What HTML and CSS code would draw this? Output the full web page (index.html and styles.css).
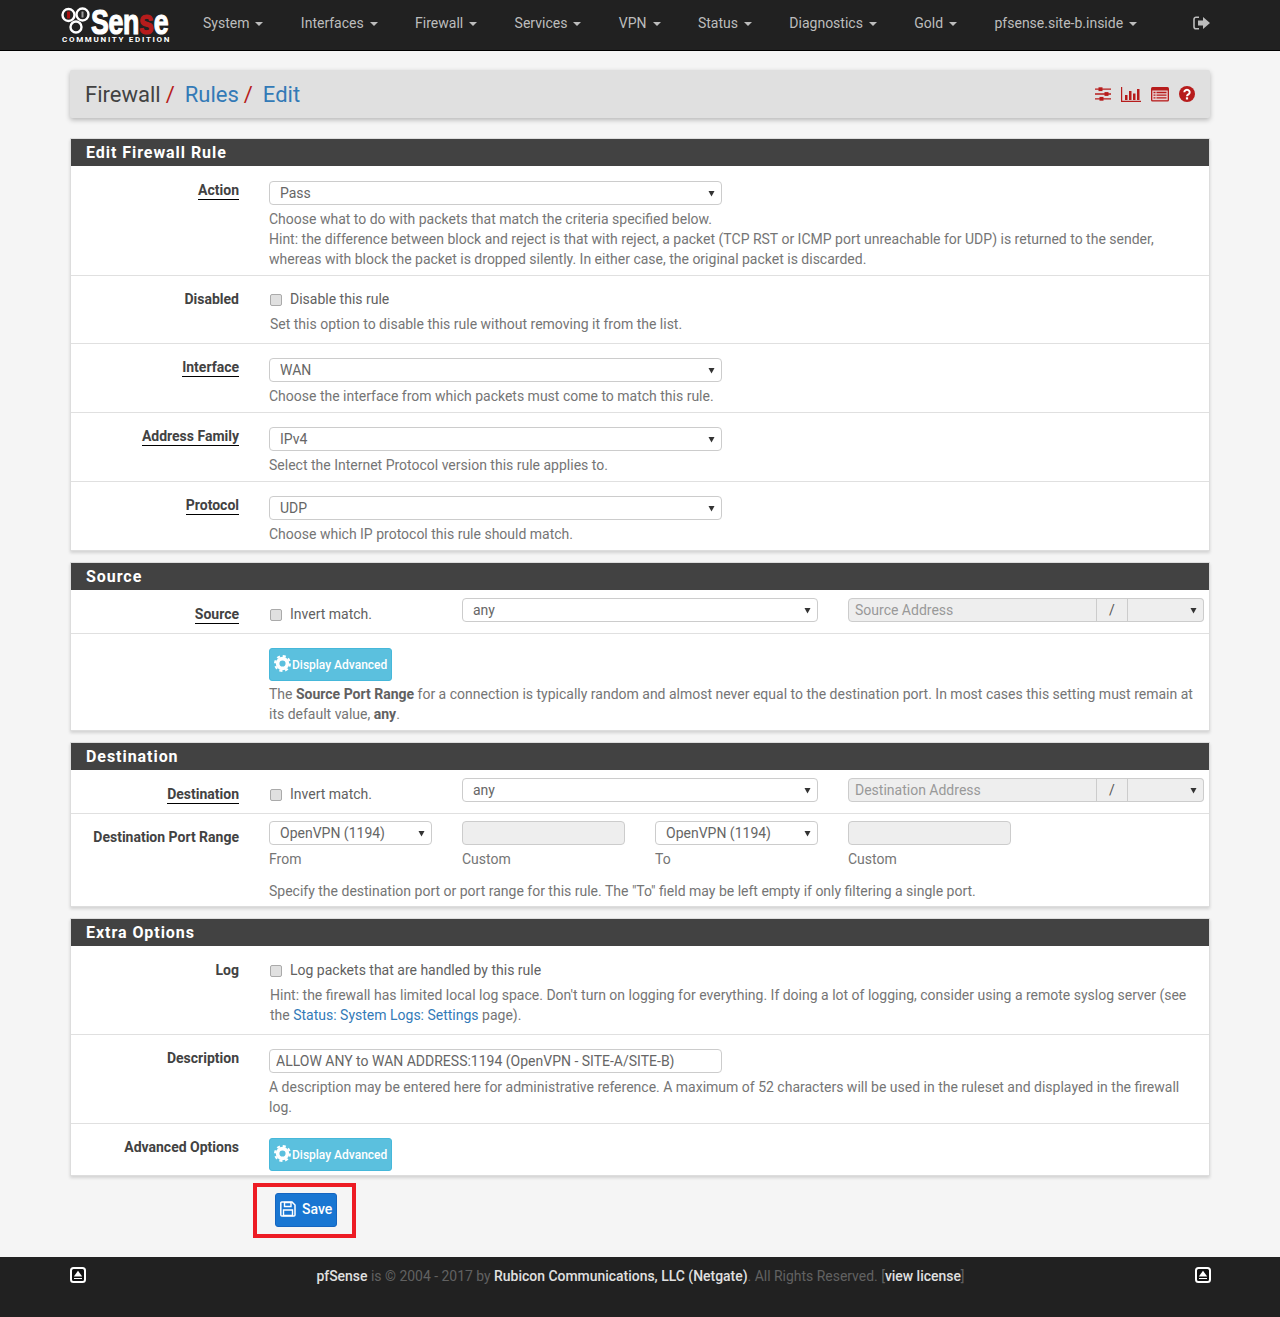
FILE: index.html
```html
<!DOCTYPE html>
<html lang="en">
<head>
<meta charset="utf-8">
<title>Firewall / Rules / Edit</title>
<link rel="stylesheet" href="styles.css">
</head>
<body>
<header class="navbar">
  <a class="brand">
    <svg class="brand-mark" viewBox="0 0 30 28" width="30" height="28"><circle cx="7.500" cy="8" r="6" fill="#222" stroke="#fff" stroke-width="2.400"/><circle cx="21.500" cy="7.500" r="6" fill="#222" stroke="#fff" stroke-width="2.400"/><circle cx="15" cy="20" r="5.500" fill="#222" stroke="#fff" stroke-width="2.400"/><rect x="6" y="4.500" width="3" height="7" fill="#a11"/><rect x="20.500" y="4.500" width="2" height="6" fill="#999"/></svg>
    <span class="brand-name">Sen<span class="brand-red">s</span>e</span>
    <span class="brand-sub">COMMUNITY EDITION</span>
  </a>
  <nav class="nav">
    <a class="nav-item">System<i class="caret"></i></a>
    <a class="nav-item">Interfaces<i class="caret"></i></a>
    <a class="nav-item">Firewall<i class="caret"></i></a>
    <a class="nav-item">Services<i class="caret"></i></a>
    <a class="nav-item">VPN<i class="caret"></i></a>
    <a class="nav-item">Status<i class="caret"></i></a>
    <a class="nav-item">Diagnostics<i class="caret"></i></a>
    <a class="nav-item">Gold<i class="caret"></i></a>
    <a class="nav-item">pfsense.site-b.inside<i class="caret"></i></a>
  </nav>
  <svg class="signout" viewBox="0 0 17 14" width="17" height="14"><path d="M6 1.200H3A2 2 0 0 0 1 3.200v7.600a2 2 0 0 0 2 2h3" fill="none" stroke="#bdbdbd" stroke-width="1.600"/><path d="M5 4.500h5V1l7 6-7 6V9.500H5z" fill="#bdbdbd"/></svg>
</header>

<main class="container">
  <div class="crumbs">
    <h1 class="crumb-title"><span>Firewall</span><i class="sep">/</i><a class="crumb-link">Rules</a><i class="sep">/</i><a class="crumb-link">Edit</a></h1>
    <div class="crumb-icons">
      <svg viewBox="0 0 16 14" width="16" height="14" class="ci-sliders"><path d="M0 2.200h16M0 7h16M0 11.800h16" stroke="#b71c1c" stroke-width="1.300"/><rect x="3.500" y=".3" width="4" height="3.800" fill="#b71c1c"/><rect x="9.500" y="5.100" width="4" height="3.800" fill="#b71c1c"/><rect x="4.500" y="9.900" width="4" height="3.800" fill="#b71c1c"/></svg>
      <svg viewBox="0 0 20 15" width="20" height="15" class="ci-chart"><path d="M.6 0v14.400H20" fill="none" stroke="#b71c1c" stroke-width="1.200"/><path d="M4 8h2.500v5H4zM8 4h2.500v9H8zM12 6.500h2.500V13H12zM16 2h2.500v11H16z" fill="#b71c1c"/></svg>
      <svg viewBox="0 0 18 15" width="18" height="15" class="ci-list"><rect width="18" height="14.500" rx="1.500" fill="#b71c1c"/><rect x="1.300" y="3.500" width="15.400" height="9.700" fill="#e8d0d0"/><path d="M2.500 5.500h2M2.500 8.200h2M2.500 10.900h2M5.500 5.500h10M5.500 8.200h10M5.500 10.900h10" stroke="#b71c1c" stroke-width="1.300"/></svg>
      <svg viewBox="0 0 16 16" width="16" height="16" class="ci-help"><circle cx="8" cy="8" r="8" fill="#b71c1c"/><path d="M5.300 6.200a2.700 2.500 0 1 1 4.200 2.100c-1 .7-1.500 1-1.500 2" fill="none" stroke="#fff" stroke-width="2"/><rect x="6.900" y="11.300" width="2.200" height="2.200" fill="#fff"/></svg>
    </div>
  </div>

  <section class="panel">
    <h2 class="panel-heading">Edit Firewall Rule</h2>
    <div class="row row-select row-first">
      <div class="label"><span class="tip">Action</span></div>
      <div class="body">
        <select class="ctl ctl-wide"><option>Pass</option></select>
        <p class="help">Choose what to do with packets that match the criteria specified below.<br>Hint: the difference between block and reject is that with reject, a packet (TCP RST or ICMP port unreachable for UDP) is returned to the sender, whereas with block the packet is dropped silently. In either case, the original packet is discarded.</p>
      </div>
    </div>
    <div class="row row-check">
      <div class="label"><span>Disabled</span></div>
      <div class="body body-check">
        <label class="check"><input type="checkbox">Disable this rule</label>
        <p class="help help-check">Set this option to disable this rule without removing it from the list.</p>
      </div>
    </div>
    <div class="row row-select">
      <div class="label"><span class="tip">Interface</span></div>
      <div class="body">
        <select class="ctl ctl-wide"><option>WAN</option></select>
        <p class="help">Choose the interface from which packets must come to match this rule.</p>
      </div>
    </div>
    <div class="row row-select">
      <div class="label"><span class="tip">Address Family</span></div>
      <div class="body">
        <select class="ctl ctl-wide"><option>IPv4</option></select>
        <p class="help">Select the Internet Protocol version this rule applies to.</p>
      </div>
    </div>
    <div class="row row-select">
      <div class="label"><span class="tip">Protocol</span></div>
      <div class="body">
        <select class="ctl ctl-wide"><option>UDP</option></select>
        <p class="help">Choose which IP protocol this rule should match.</p>
      </div>
    </div>
  </section>

  <section class="panel">
    <h2 class="panel-heading">Source</h2>
    <div class="row row-addr">
      <div class="label label-addr"><span class="tip">Source</span></div>
      <div class="body addr">
        <label class="check check-addr"><input type="checkbox">Invert match.</label>
        <select class="ctl ctl-any"><option>any</option></select>
        <div class="group">
          <input class="group-input" disabled placeholder="Source Address">
          <span class="group-slash">/</span>
          <select class="group-select" disabled><option></option></select>
        </div>
      </div>
    </div>
    <div class="row row-adv">
      <div class="label"></div>
      <div class="body">
        <button class="btn-adv" type="button"><svg viewBox="0 0 16 16" width="17" height="17"><circle cx="8" cy="8" r="4.600" fill="none" stroke="#fff" stroke-width="3.400"/><circle cx="8" cy="8" r="7" fill="none" stroke="#fff" stroke-width="2" stroke-dasharray="2.900 2.600"/></svg>Display Advanced</button>
        <p class="help help-adv">The <b>Source Port Range</b> for a connection is typically random and almost never equal to the destination port. In most cases this setting must remain at its default value, <b>any</b>.</p>
      </div>
    </div>
  </section>

  <section class="panel">
    <h2 class="panel-heading">Destination</h2>
    <div class="row row-addr">
      <div class="label label-addr"><span class="tip">Destination</span></div>
      <div class="body addr">
        <label class="check check-addr"><input type="checkbox">Invert match.</label>
        <select class="ctl ctl-any"><option>any</option></select>
        <div class="group">
          <input class="group-input" disabled placeholder="Destination Address">
          <span class="group-slash">/</span>
          <select class="group-select" disabled><option></option></select>
        </div>
      </div>
    </div>
    <div class="row row-ports">
      <div class="label"><span>Destination Port Range</span></div>
      <div class="body">
        <div class="ports">
          <div class="port"><select class="ctl ctl-full"><option>OpenVPN (1194)</option></select><span class="sub">From</span></div>
          <div class="port"><input class="port-input" disabled><span class="sub">Custom</span></div>
          <div class="port"><select class="ctl ctl-full"><option>OpenVPN (1194)</option></select><span class="sub">To</span></div>
          <div class="port"><input class="port-input" disabled><span class="sub">Custom</span></div>
        </div>
        <p class="help help-ports">Specify the destination port or port range for this rule. The "To" field may be left empty if only filtering a single port.</p>
      </div>
    </div>
  </section>

  <section class="panel">
    <h2 class="panel-heading">Extra Options</h2>
    <div class="row row-check row-log">
      <div class="label"><span>Log</span></div>
      <div class="body body-check">
        <label class="check"><input type="checkbox">Log packets that are handled by this rule</label>
        <p class="help help-check">Hint: the firewall has limited local log space. Don't turn on logging for everything. If doing a lot of logging, consider using a remote syslog server (see the <a class="link">Status: System Logs: Settings</a> page).</p>
      </div>
    </div>
    <div class="row row-desc">
      <div class="label"><span>Description</span></div>
      <div class="body">
        <input class="text-input" value="ALLOW ANY to WAN ADDRESS:1194 (OpenVPN - SITE-A/SITE-B)">
        <p class="help">A description may be entered here for administrative reference. A maximum of 52 characters will be used in the ruleset and displayed in the firewall log.</p>
      </div>
    </div>
    <div class="row row-adv2">
      <div class="label"><span>Advanced Options</span></div>
      <div class="body">
        <button class="btn-adv" type="button"><svg viewBox="0 0 16 16" width="17" height="17"><circle cx="8" cy="8" r="4.600" fill="none" stroke="#fff" stroke-width="3.400"/><circle cx="8" cy="8" r="7" fill="none" stroke="#fff" stroke-width="2" stroke-dasharray="2.900 2.600"/></svg>Display Advanced</button>
      </div>
    </div>
  </section>

  <div class="save-mark">
    <button class="btn-save" type="button"><svg viewBox="0 0 16 16" width="16" height="16"><path d="M1.800 1h10.200l3 3v10a1 1 0 0 1-1 1H1.800a1 1 0 0 1-1-1V2a1 1 0 0 1 1-1z" fill="none" stroke="#fff" stroke-width="1.500"/><path d="M4.500 1.500h6.500v4H4.500zM3.500 9h9v5.500h-9z" fill="none" stroke="#fff" stroke-width="1.400"/></svg>Save</button>
  </div>
</main>

<footer class="footer">
  <svg viewBox="0 0 16 16" width="16" height="16"><rect x="1" y="1" width="14" height="14" rx="2.500" fill="#111" stroke="#fff" stroke-width="2"/><path d="M8 3.800l4.200 5.700H3.800z" fill="#fff"/><path d="M4 11.500h8" stroke="#fff" stroke-width="1"/></svg>
  <p class="foot-text"><b>pfSense</b> is © 2004 - 2017 by <b>Rubicon Communications, LLC (Netgate)</b>. All Rights Reserved. [<b>view license</b>]</p>
  <svg viewBox="0 0 16 16" width="16" height="16"><rect x="1" y="1" width="14" height="14" rx="2.500" fill="#111" stroke="#fff" stroke-width="2"/><path d="M8 3.800l4.200 5.700H3.800z" fill="#fff"/><path d="M4 11.500h8" stroke="#fff" stroke-width="1"/></svg>
</footer>
</body>
</html>
```
FILE: styles.css
```css
* { box-sizing: border-box; }
html, body { margin: 0; padding: 0; }
body { background: #f5f5f5; font-family: Roboto, "Noto Sans", sans-serif; font-size: 14px; line-height: 20px; color: #757575; }
p, h1, h2 { margin: 0; }

.navbar { height: 51px; background: #212121; border-bottom: 1px solid #000; display: flex; align-items: flex-start; padding-left: 61px; }
.brand { position: relative; width: 110px; height: 50px; flex: none; color: #fff; }
.brand-mark { position: absolute; left: 0; top: 7px; }
.brand-name { position: absolute; left: 30px; top: 4px; font: 700 29px/30px "Liberation Sans", sans-serif; letter-spacing: -.3px; -webkit-text-stroke: 1px #fff; transform: scale(.92, 1.2); transform-origin: left top; white-space: nowrap; }
.brand-red { color: #b71c1c; -webkit-text-stroke-color: #b71c1c; }
.brand-sub { position: absolute; left: 1px; top: 35px; font: 700 8px/9px Roboto, sans-serif; letter-spacing: 1.700px; white-space: nowrap; }
.nav { display: flex; gap: 37.400px; margin-left: 32px; height: 50px; align-items: center; flex: 1; }
.nav-item { color: #bdbdbd; white-space: nowrap; margin-top: -4px; }
.caret { display: inline-block; margin-left: 6px; vertical-align: middle; border-top: 4px solid #bdbdbd; border-left: 4px solid transparent; border-right: 4px solid transparent; }
.signout { flex: none; margin: 16px 70px 0 0; }

.container { width: 1140px; margin: 0 auto; padding: 19px 0; }
.crumbs { height: 48px; background: #e0e0e0; border-radius: 2px; box-shadow: 0 2px 5px rgba(0,0,0,.26); display: flex; align-items: center; justify-content: space-between; padding: 0 15px; margin-bottom: 20px; }
.crumb-title { font-size: 22px; font-weight: 400; line-height: 48px; margin-top: 2px; color: #424242; white-space: nowrap; }
.sep { font-style: normal; color: #b71c1c; margin: 0 10px 0 5px; }
.crumb-link { color: #337ab7; }
.crumb-icons { display: flex; align-items: center; gap: 10px; }

.panel { margin: 0 0 11px; background: #fff; border: 1px solid #ddd; box-shadow: 0 2px 3px rgba(0,0,0,.14); }
.panel-heading { height: 27px; background: #424242; color: #fff; font-size: 16px; line-height: 27px; font-weight: 700; letter-spacing: .95px; padding-left: 15px; }
.row { display: flex; border-bottom: 1px solid #e0e0e0; }
.row:last-child { border-bottom: 0; }
.label { width: 168px; flex: none; text-align: right; font-weight: 700; color: #424242; line-height: 20px; }
.label span { display: inline-block; line-height: 17px; }
.tip { border-bottom: 1px solid #000; }
.body { margin-left: 30px; flex: 1; min-width: 0; padding-right: 15px; }
.row-select { padding: 14px 0 6px; }
.row-first { padding-top: 15px; }
.row-select .label { margin-top: -1px; }
.row-check { padding: 13px 0 9px; }
.row-log { padding-top: 14px; }
.body-check { padding-left: 1px; }
.row-addr { padding: 8px 0 10px; height: 44px; }
.label-addr { padding-top: 6px; }
.row-adv { padding: 14px 0 6px; }
.row-ports { padding: 7px 0 5px; }
.row-ports .label { padding-top: 6px; }
.row-desc { padding: 14px 0 6px; }
.row-adv2 { padding: 14px 0 4px; }
.row-adv2 .label { margin-top: -1px; }
.row-desc .label { margin-top: -1px; }

.ctl { height: 24px; font: 14px/20px Roboto, sans-serif; color: #666; border: 1px solid #ccc; border-radius: 4px; padding: 0 20px 0 10px; display: block; appearance: none; background: #fff url("data:image/svg+xml,%3Csvg xmlns='http://www.w3.org/2000/svg' width='7' height='7'%3E%3Cpath d='M.5 1h6L3.500 6.500z' fill='%23333'/%3E%3C/svg%3E") no-repeat right 6px center; }
.ctl-wide { width: 453px; }
.ctl-any { width: 356px; flex: none; }
.ctl-full { width: 163px; }
.help { margin-top: 4px; }
.help b { color: #616161; }
.help-check { margin-top: 5px; }
.check { display: flex; align-items: center; height: 20px; color: #616161; }
.check input { appearance: none; width: 12px; height: 12px; margin: 2px 8px 0 0; background: #e0e0e0; border: 1px solid #aaa; border-radius: 2px; }
.check-addr { width: 193px; flex: none; margin-top: 6px; padding-left: 1px; }
.addr { display: flex; align-items: flex-start; padding-right: 5px; }
.addr .ctl-any { margin-right: 30px; }
.group { display: flex; width: 356px; height: 24px; flex: none; }
.group-input { flex: 1; min-width: 0; height: 24px; font: 14px Roboto, sans-serif; padding: 0 6px; background: #eee; border: 1px solid #ccc; border-radius: 4px 0 0 4px; color: #999; }
.group-input::placeholder { color: #999; }
.group-slash { width: 32px; flex: none; text-align: center; line-height: 22px; background: #eee; border: 1px solid #ccc; color: #555; margin-left: -1px; }
.group-select { width: 76px; height: 24px; flex: none; border: 1px solid #ccc; border-left: 0; border-radius: 0 4px 4px 0; padding: 0 6px; opacity: 1; appearance: none; background: #eee url("data:image/svg+xml,%3Csvg xmlns='http://www.w3.org/2000/svg' width='7' height='7'%3E%3Cpath d='M.5 1h6L3.500 6.500z' fill='%23333'/%3E%3C/svg%3E") no-repeat right 6px center; }
.btn-adv { display: flex; align-items: center; height: 33px; width: 123px; padding: 1px 0 0 4px; background: #5bc0de; border: 1px solid #46b8da; border-radius: 3px; color: #fff; font: 500 12px Roboto, sans-serif; white-space: nowrap; }
.btn-adv svg { margin-right: 1px; margin-top: -4px; }
.help-adv { margin-top: 3px; }
.ports { display: flex; gap: 30px; }
.port { width: 163px; }
.port-input { display: block; width: 163px; height: 24px; background: #eee; border: 1px solid #ccc; border-radius: 4px; }
.sub { display: block; margin-top: 4px; }
.help-ports { margin-top: 12px; }
.text-input { display: block; width: 453px; height: 24px; font: 14px Roboto, sans-serif; color: #666; padding: 0 6px; background: #fff; border: 1px solid #ccc; border-radius: 4px; }
.link { color: #337ab7; }

.save-mark { width: 103px; height: 55px; margin: -4px 0 0 183px; border: 4px solid #ed1c24; padding: 6px 0 0 18px; }
.btn-save { display: flex; align-items: center; gap: 6px; width: 62px; height: 34px; padding: 0 0 2px 4px; background: #1976d2; border: 1px solid #1565c0; border-radius: 3px; color: #fff; font: 500 14px Roboto, sans-serif; }

.footer { height: 60px; background: #212121; display: flex; justify-content: space-between; align-items: flex-start; padding: 10px 69px 0 70px; color: #616161; }
.foot-text { line-height: 20px; margin-top: -1px; font-size: 13.950px; }
.foot-text b { color: #e0e0e0; font-weight: 500; }
```
